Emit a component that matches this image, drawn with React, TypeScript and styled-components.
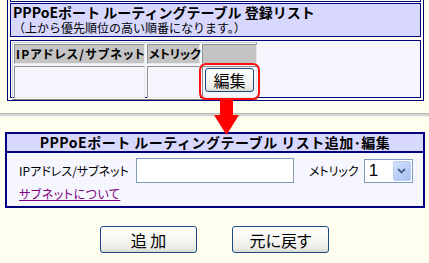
import React from "react";
import styled, { createGlobalStyle } from "styled-components";

const navy = "#000080";
const jp = `"Noto Sans CJK JP", "Noto Sans", sans-serif`;

const Global = createGlobalStyle`
  html, body { margin: 0; padding: 0; background: #ffffef; }
  body { font-family: ${jp}; font-size: 12px; color: #000; font-feature-settings: "palt"; }
  * { box-sizing: border-box; }
`;

const Page = styled.div`
  position: relative;
  width: 429px;
  height: 263px;
  overflow: hidden;
`;

const ListBox = styled.div`
  margin: 0 5px 0 7px;
  border: 1px solid ${navy};
  border-top: none;
  padding: 0 2px 2px 2px;
  display: flex;
  flex-direction: column;
`;

const PrevCell = styled.div`
  height: 2px;
  border: 1px solid ${navy};
  border-top: none;
`;

const HeadCell = styled.div`
  margin-top: 1px;
  height: 34px;
  border: 1px solid ${navy};
  background: #d8d8ff;
  padding: 0 2px;
  line-height: 16px;
`;

const HeadTitle = styled.div`
  font-weight: bold;
  font-size: 14px;
  font-feature-settings: normal;
  white-space: nowrap;
`;

const HeadNote = styled.div`
  font-size: 12px;
  font-feature-settings: normal;
  white-space: nowrap;
`;

const BodyCell = styled.div`
  margin-top: 3px;
  height: 58px;
  border: 1px solid ${navy};
  background: #f6f6ff;
  padding: 1px 1px;
`;

const ListTable = styled.div`
  display: grid;
  grid-template-columns: 131px 53px 55px;
  grid-template-rows: 20px 32px;
  gap: 2px;
  width: 245px;
  padding: 1px;
  border: 1px solid;
  border-color: #d0d0d0 #808080 #808080 #d0d0d0;
`;

const Th = styled.div<{ $spacing?: number }>`
  background: #c4c4c4;
  border: 1px solid;
  border-color: #909090 #e8e8e8 #e8e8e8 #909090;
  font-weight: bold;
  font-size: 12px;
  line-height: 18px;
  padding-left: 1px;
  letter-spacing: ${(p) => p.$spacing ?? 0}px;
  white-space: nowrap;
`;

const Td = styled.div<{ $center?: boolean }>`
  border: 1px solid;
  border-color: #909090 #e8e8e8 #e8e8e8 #909090;
  display: flex;
  justify-content: ${(p) => (p.$center ? "center" : "flex-start")};
  align-items: flex-start;
  padding-top: 1px;
`;

const Highlight = styled.div`
  position: relative;
`;

const RedRing = styled.div`
  position: absolute;
  inset: -5px -6px -8px -6px;
  border: 2px solid #ff1010;
  border-radius: 7px;
  pointer-events: none;
`;

const XpButton = styled.button<{ $w: number; $h: number }>`
  width: ${(p) => p.$w}px;
  height: ${(p) => p.$h}px;
  padding: 0;
  border: 1px solid #1c4a84;
  border-radius: 3px;
  background: linear-gradient(#ffffff 0%, #f7f7f4 45%, #ecebe6 85%, #d8d7d0 100%);
  font-family: ${jp};
  font-size: 16px;
  line-height: 1;
  color: #000;
  display: flex;
  align-items: center;
  justify-content: center;
  font-feature-settings: "palt";
`;

const Arrow = styled.svg`
  position: absolute;
  left: 214px;
  top: 100px;
`;

const Separator = styled.div`
  margin-top: 12px;
  height: 4px;
  border-top: 1px solid #b8b8b8;
  border-bottom: 1px solid #f0f0f0;
  background: #d4d4d0;
`;

const EditPanel = styled.div`
  margin: 15px 5px 0 5px;
  border: 2px solid ${navy};
  width: 420px;
`;

const EditHead = styled.div`
  height: 19px;
  background: #d8d8ff;
  border-bottom: 2px solid ${navy};
  text-align: center;
  font-weight: bold;
  font-size: 14px;
  line-height: 17px;
  letter-spacing: 0.5px;
  font-feature-settings: normal;
  white-space: nowrap;
`;

const EditBody = styled.div`
  height: 53px;
  background: #f6f6ff;
  padding: 5px 0 0 12px;
  display: flex;
  flex-direction: column;
`;

const FieldRow = styled.div`
  display: flex;
  align-items: center;
  height: 25px;
`;

const Label = styled.span<{ $gap: number }>`
  font-size: 12px;
  margin-right: ${(p) => p.$gap}px;
  white-space: nowrap;
`;

const TextBox = styled.div`
  width: 158px;
  height: 25px;
  border: 1px solid #7f9db9;
  background: #fff;
  margin-right: 15px;
`;

const SelectBox = styled.div`
  width: 49px;
  height: 24px;
  border: 1px solid #7f9db9;
  background: #fff;
  display: flex;
  align-items: center;
  padding: 0 1px 0 4px;
  margin-top: 1px;
`;

const SelectValue = styled.span`
  flex: 1;
  font-family: "Liberation Sans", sans-serif;
  font-size: 17px;
`;

const DropBtn = styled.div`
  width: 18px;
  height: 20px;
  border-radius: 2px;
  background: linear-gradient(135deg, #d2e0fd 0%, #b9cdf8 60%, #a8bff4 100%);
  border: 1px solid #b8ccf6;
  display: flex;
  align-items: center;
  justify-content: center;
`;

const HelpLink = styled.a`
  margin-top: 2px;
  font-size: 12px;
  letter-spacing: 0.5px;
  color: #800080;
  text-decoration: underline;
  width: fit-content;
`;

const Actions = styled.div`
  display: flex;
  gap: 35px;
  padding-left: 100px;
  margin-top: 18px;
`;

export default function App() {
  return (
    <Page>
      <Global />
      <ListBox>
        <PrevCell />
        <HeadCell>
          <HeadTitle>PPPoEポート ルーティングテーブル 登録リスト</HeadTitle>
          <HeadNote>（上から優先順位の高い順番になります。）</HeadNote>
        </HeadCell>
        <BodyCell>
          <ListTable>
            <Th $spacing={1.2}>IPアドレス/サブネット</Th>
            <Th>メトリック</Th>
            <Th />
            <Td />
            <Td />
            <Td $center>
              <Highlight>
                <XpButton $w={49} $h={24}>編集</XpButton>
                <RedRing />
              </Highlight>
            </Td>
          </ListTable>
        </BodyCell>
      </ListBox>
      <Separator />
      <EditPanel>
        <EditHead>PPPoEポート ルーティングテーブル リスト追加･編集</EditHead>
        <EditBody>
          <FieldRow>
            <Label $gap={7}>IPアドレス/サブネット</Label>
            <TextBox />
            <Label $gap={5}>メトリック</Label>
            <SelectBox>
              <SelectValue>1</SelectValue>
              <DropBtn>
                <svg width="9" height="6" viewBox="0 0 9 6">
                  <path d="M1 1 L4.5 4.5 L8 1" fill="none" stroke="#4d6185" strokeWidth="1.8" />
                </svg>
              </DropBtn>
            </SelectBox>
          </FieldRow>
          <HelpLink href="#">サブネットについて</HelpLink>
        </EditBody>
      </EditPanel>
      <Actions>
        <XpButton $w={97} $h={27}>追 加</XpButton>
        <XpButton $w={97} $h={27}>元に戻す</XpButton>
      </Actions>
      <Arrow width="26" height="36" viewBox="0 0 26 36">
        <polygon points="6,0 19,0 19,15 25,15 12.5,35 0,15 6,15" fill="#ff0000" />
      </Arrow>
    </Page>
  );
}
